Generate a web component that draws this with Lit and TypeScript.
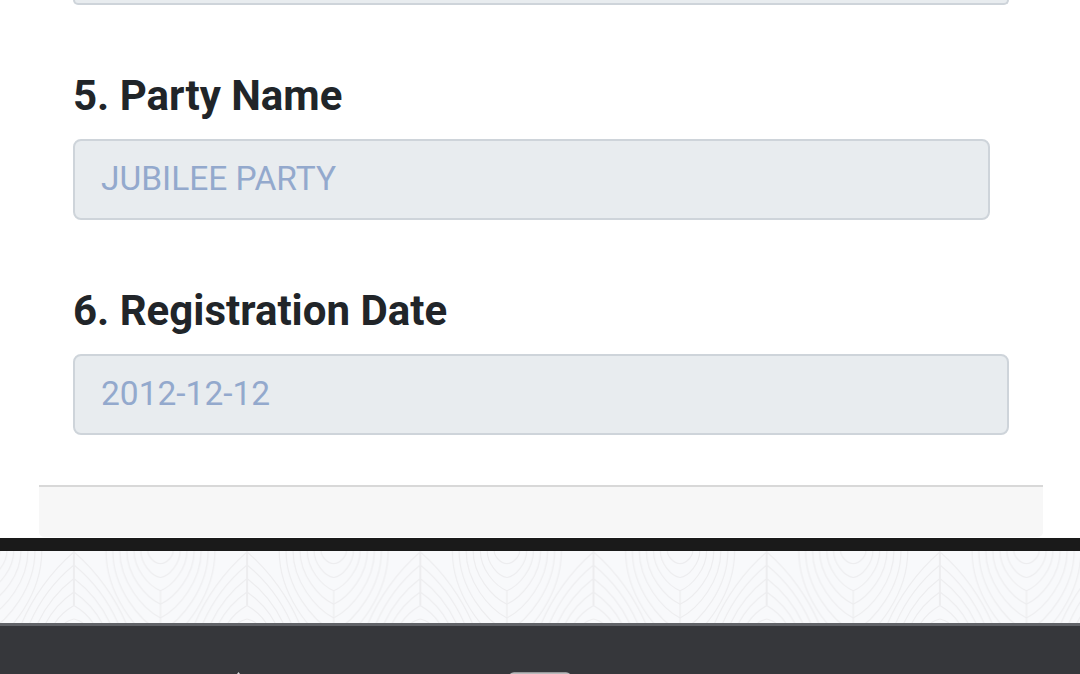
import { LitElement, html, css, svg } from 'lit'
import { customElement, property } from 'lit/decorators.js'

@customElement('form-field')
export class FormField extends LitElement {
  @property() label = ''
  @property() value = ''

  render() {
    return html`
      <label class="label">${this.label}</label>
      <div class="control">${this.value}</div>
    `
  }

  static styles = css`
    :host {
      display: block;
      width: 936px;
    }

    :host([narrow]) {
      width: 917px;
    }

    .label {
      display: block;
      height: 66px;
      font-size: 42px;
      line-height: 46px;
      font-weight: 700;
      color: #212529;
      white-space: nowrap;
    }

    .control {
      box-sizing: border-box;
      height: 81px;
      padding: 0 26px;
      border: 2px solid #ced4da;
      border-radius: 8px;
      background-color: #e8ecef;
      color: #93a9cd;
      font-size: 33.5px;
      line-height: 75px;
      white-space: nowrap;
    }
  `
}

@customElement('pattern-strip')
export class PatternStrip extends LitElement {
  render() {
    return html`
      <svg class="pattern" width="1080" height="72">
        <defs>
          <pattern id="waves" x="73.9" y="0" width="173.2" height="96" patternUnits="userSpaceOnUse">
            ${this.bowls.map(([half, bottom, round]) => svg`
              <path class="line" d="M${86.6 - half} 0C${86.6 - half} ${bottom * 0.45} ${86.6 - half * 0.45} ${bottom * round} 86.6 ${bottom}C${86.6 + half * 0.45} ${bottom * round} ${86.6 + half} ${bottom * 0.45} ${86.6 + half} 0" />
            `)}
            <path class="line" d="M86.6 39.7V96" />
            ${this.hills.map(([top, end]) => svg`
              <path class="line" d="M0 ${top}C${end * 0.45} ${top + (72 - top) * 0.28} ${end * 0.8} ${top + (72 - top) * 0.66} ${end} 72" />
              <path class="line" d="M173.2 ${top}C${173.2 - end * 0.45} ${top + (72 - top) * 0.28} ${173.2 - end * 0.8} ${top + (72 - top) * 0.66} ${173.2 - end} 72" />
            `)}
            <path class="line" d="M.4 0V54.5M172.8 0V54.5" />
          </pattern>
        </defs>
        <rect width="1080" height="72" fill="url(#waves)" />
      </svg>
    `
  }

  // half width at the top edge, depth of the lowest point, roundness at the bottom
  bowls = [
    [12.7, 12.7, 1],
    [19.7, 26.5, 0.97],
    [26.5, 39.7, 0.88],
    [33.7, 53.3, 0.86],
    [40.7, 67, 0.86],
    [47.7, 81, 0.86],
    [54.5, 94.5, 0.86]
  ]

  // height of the peak, distance from the spine at the bottom edge
  hills = [[1, 52], [14, 44], [27.5, 36], [41, 28], [54.5, 19], [68, 9]]

  static styles = css`
    :host {
      display: block;
      height: 72px;
      background-color: #f8f9fb;
    }

    .pattern {
      display: block;
    }

    .line {
      fill: none;
      stroke: #ededef;
      stroke-width: 1.2;
    }
  `
}

@customElement('app-root')
export class AppRoot extends LitElement {
  render() {
    return html`
      <main class="card">
        <div class="previous"></div>
        <form-field label="5. Party Name" value="JUBILEE PARTY" narrow></form-field>
        <form-field label="6. Registration Date" value="2012-12-12"></form-field>
        <div class="card-footer"></div>
      </main>
      <div class="bar"></div>
      <pattern-strip></pattern-strip>
      <footer class="footer">
        <svg class="marks" width="1080" height="48">
          <path d="M237 48L238.5 46L240 48Z" fill="#d9d9db" />
          <rect x="508" y="46.3" width="64" height="20" rx="6" fill="#b9babc" />
        </svg>
      </footer>
    `
  }

  static styles = css`
    :host {
      display: flex;
      flex-direction: column;
      height: 674px;
      overflow: hidden;
      background-color: #fff;
      font-family: Roboto, sans-serif;
    }

    .card {
      box-sizing: border-box;
      display: flex;
      flex-direction: column;
      gap: 68px;
      height: 538px;
      padding: 0 37px 0 73px;
    }

    .previous {
      box-sizing: border-box;
      flex: none;
      width: 936px;
      height: 5px;
      border: 2px solid #ced4da;
      border-top: 0;
      border-radius: 0 0 8px 8px;
      background-color: #e8ecef;
    }

    .card-footer {
      box-sizing: border-box;
      flex: none;
      height: 52px;
      margin: -18px 0 0 -34px;
      border-top: 2px solid #d8d8d8;
      border-radius: 0 0 5px 5px;
      background-color: #f7f7f7;
    }

    .bar {
      flex: none;
      height: 13px;
      background-color: #1a1a1a;
    }

    .footer {
      box-sizing: border-box;
      height: 51px;
      border-top: 3px solid #616368;
      background-color: #36373b;
    }

    .marks {
      display: block;
    }
  `
}
